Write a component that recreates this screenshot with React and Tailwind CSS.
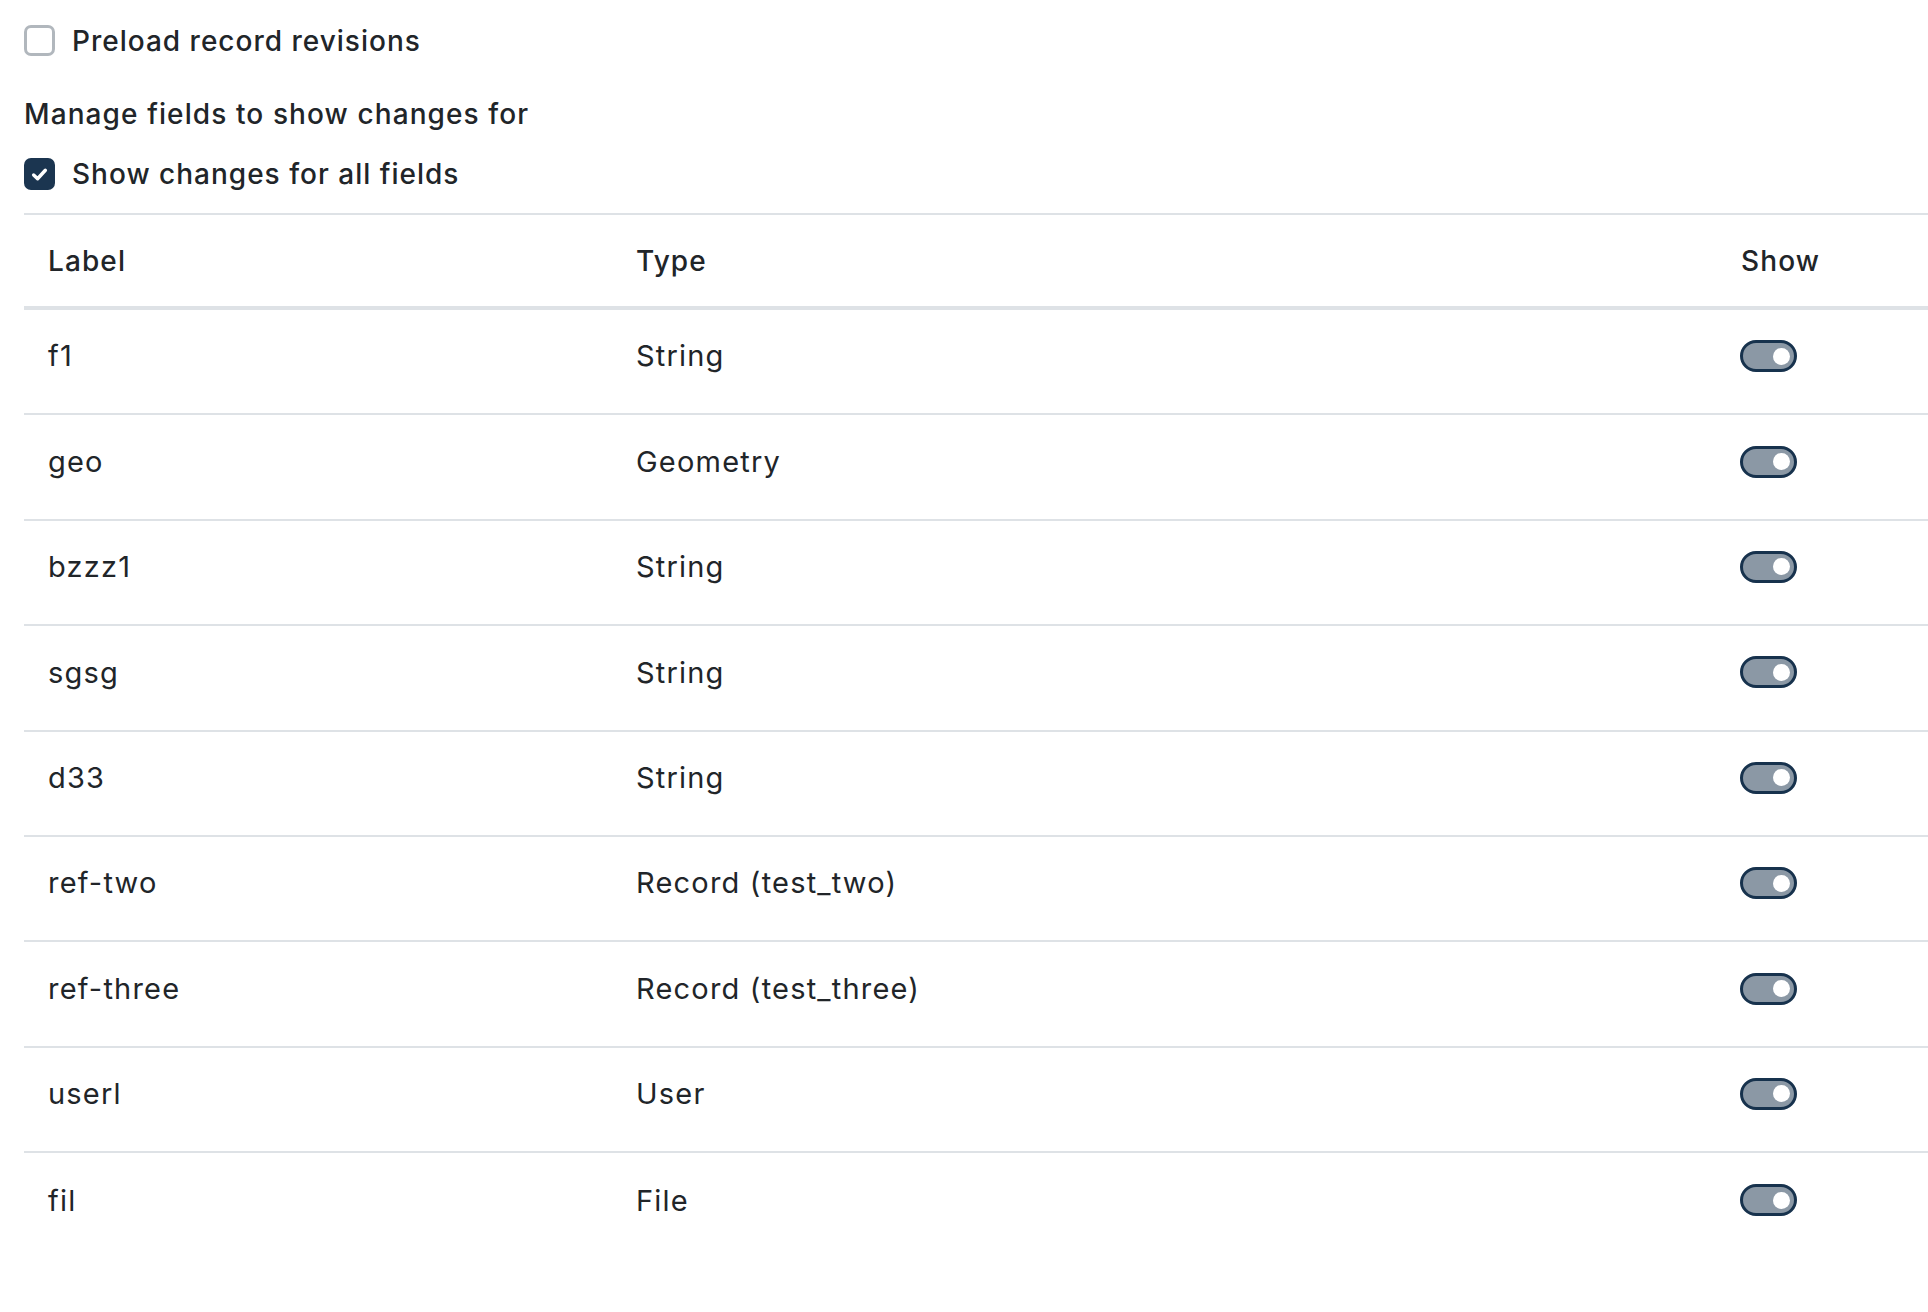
import React from "react";

const rows = [
  ["f1", "String"],
  ["geo", "Geometry"],
  ["bzzz1", "String"],
  ["sgsg", "String"],
  ["d33", "String"],
  ["ref-two", "Record (test_two)"],
  ["ref-three", "Record (test_three)"],
  ["userl", "User"],
  ["fil", "File"],
];

function Toggle() {
  return (
    <div className="w-[57px] h-[32px] rounded-full border-[3px] border-[#17324d] bg-[#8b98a5] flex items-center justify-end pr-[4px]">
      <div className="w-[17px] h-[17px] rounded-full bg-white" />
    </div>
  );
}

export default function App() {
  return (
    <div
      className="w-[1928px] h-[1312px] bg-white overflow-hidden text-[#212529] pl-[24px] pt-[25px]"
      style={{ fontFamily: "Inter, 'Open Sans', sans-serif" }}
    >
      <div className="flex items-center gap-[17px] h-[31px]">
        <div className="w-[31px] h-[31px] rounded-[7px] border-[3px] border-[#b1b7bd] bg-white" />
        <span className="text-[28px] tracking-[1px] font-medium leading-none">Preload record revisions</span>
      </div>
      <div className="mt-[38px] h-[40px] flex items-center text-[28px] tracking-[1.1px] font-medium">
        Manage fields to show changes for
      </div>
      <div className="mt-[24px] flex items-center gap-[17px] h-[32px]">
        <div className="w-[31px] h-[32px] rounded-[7px] bg-[#1b3550] flex items-center justify-center">
          <svg width="17" height="15" viewBox="0 0 16 14" fill="none">
            <path d="M2.5 7.5 L6.2 11 L13.5 3" stroke="white" strokeWidth="3.2" strokeLinecap="round" strokeLinejoin="round" />
          </svg>
        </div>
        <span className="text-[28px] tracking-[1px] font-medium leading-none">Show changes for all fields</span>
      </div>
      <div className="mt-[23px] border-t-2 border-[#dee2e6]">
        <div className="h-[95px] border-b-4 border-[#dee2e6] grid grid-cols-[588px_1105px_1fr] items-center text-[28px] tracking-[1.1px] font-medium">
          <div className="pl-[24px]">Label</div>
          <div className="pl-[24px]">Type</div>
          <div className="pl-[24px]">Show</div>
        </div>
        {rows.map(([label, type], i) => (
          <div
            key={label}
            className={
              i < rows.length - 1
                ? "h-[105.4px] pb-[11px] border-b-2 border-[#dee2e6] grid grid-cols-[588px_1105px_1fr] items-center text-[29px] tracking-[1.2px]"
                : "h-[105.4px] pb-[11px] grid grid-cols-[588px_1105px_1fr] items-center text-[29px] tracking-[1.2px]"
            }
          >
            <div className="pl-[24px]">{label}</div>
            <div className="pl-[24px]">{type}</div>
            <div className="pl-[23px]">
              <Toggle />
            </div>
          </div>
        ))}
      </div>
    </div>
  );
}
